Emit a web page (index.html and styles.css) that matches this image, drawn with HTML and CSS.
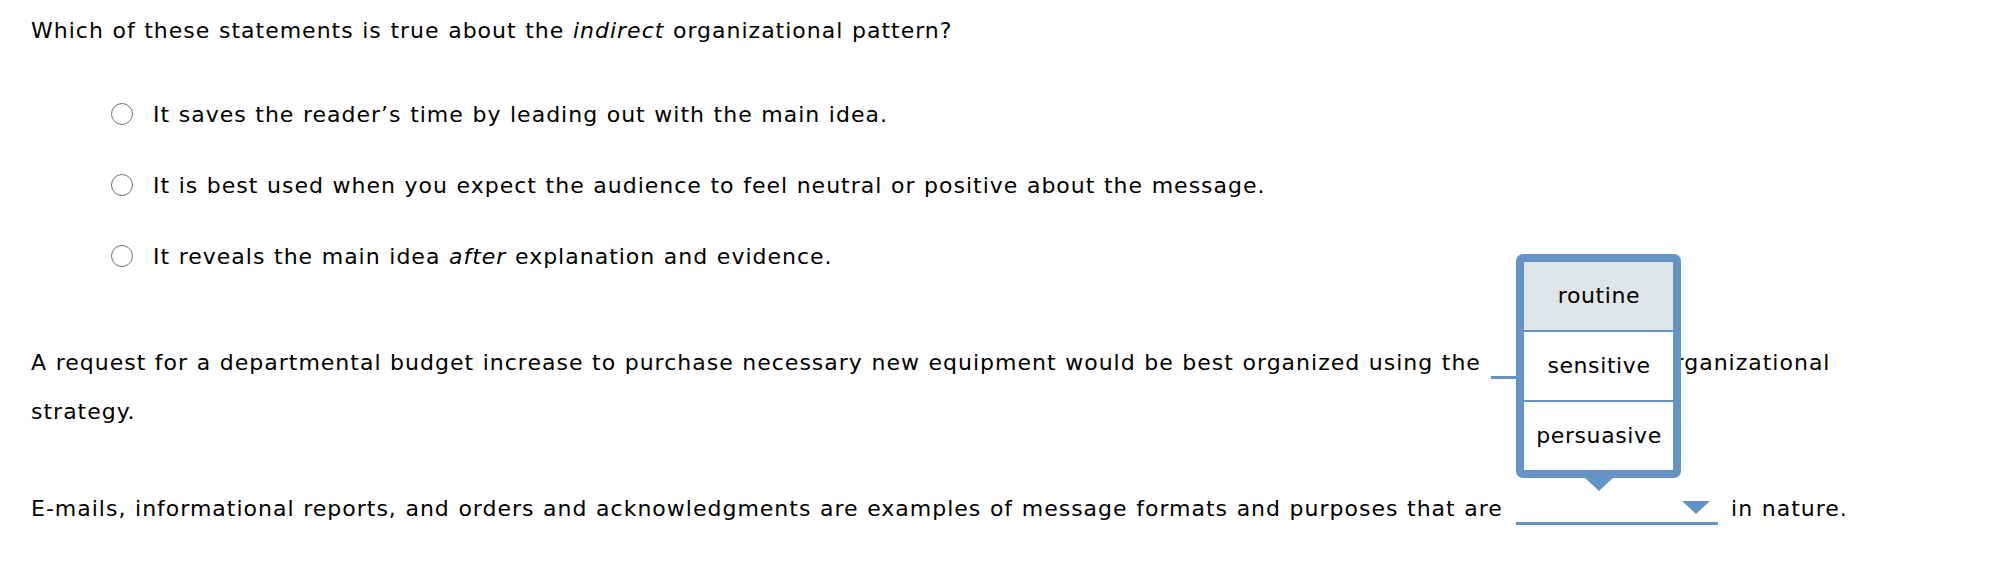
FILE: index.html
```html
<!DOCTYPE html>
<html lang="en">
<head>
<meta charset="utf-8">
<title>Quiz</title>
<link rel="stylesheet" href="styles.css">
</head>
<body>
<div class="page">
  <p class="q q1">Which of these statements is true about the <em>indirect</em> organizational pattern?</p>
  <ul class="options">
    <li class="option"><span class="radio"></span><span class="opt-text">It saves the reader’s time by leading out with the main idea.</span></li>
    <li class="option"><span class="radio"></span><span class="opt-text">It is best used when you expect the audience to feel neutral or positive about the message.</span></li>
    <li class="option"><span class="radio"></span><span class="opt-text">It reveals the main idea <em>after</em> explanation and evidence.</span></li>
  </ul>
  <p class="q q2">A request for a departmental budget increase to purchase necessary new equipment would be best organized using the <span class="dd dd1">&nbsp;<span class="dd-arrow"></span></span> organizational strategy.</p>
  <p class="q q3">E-mails, informational reports, and orders and acknowledgments are examples of message formats and purposes that are <span class="dd dd2">&nbsp;<span class="dd-arrow"></span><span class="popup"><span class="popup-item active">routine</span><span class="popup-item">sensitive</span><span class="popup-item">persuasive</span></span></span> in nature.</p>
</div>
</body>
</html>
```
FILE: styles.css
```css
html, body {
  margin: 0;
  background: #fff;
}
body {
  font-family: "DejaVu Sans", Verdana, sans-serif;
  font-size: 22px;
  letter-spacing: 1px;
  word-spacing: 0.6px;
  color: #000;
}
.page {
  padding: 16px 0 0 31px;
  width: 1850px;
}
.q {
  margin: 0;
}
.q1 {
  line-height: 30px;
}
.options {
  list-style: none;
  margin: 54px 0 0;
  padding: 0 0 0 80px;
}
.option {
  display: flex;
  align-items: flex-start;
  height: 30px;
  line-height: 30px;
}
.option + .option {
  margin-top: 41px;
}
.radio {
  flex: none;
  width: 22px;
  height: 22px;
  box-sizing: border-box;
  border: 1.5px solid #747474;
  border-radius: 50%;
  margin-top: 3px;
  margin-right: 20px;
  background: #fff;
}
.q2 {
  margin-top: 66px;
  line-height: 49px;
}
.q3 {
  margin-top: 56px;
  line-height: 33px;
}
.dd {
  display: inline-block;
  position: relative;
  line-height: 24px;
  padding-bottom: 1px;
  border-bottom: 3px solid #6494c4;
  vertical-align: baseline;
  margin: 0 4px 0 1px;
}
.dd1 {
  width: 157px;
}
.dd2 {
  width: 202px;
  margin-left: 5px;
}
.dd-arrow {
  position: absolute;
  right: 8px;
  top: 4px;
  width: 0;
  height: 0;
  border-left: 14px solid transparent;
  border-right: 14px solid transparent;
  border-top: 13px solid #6494c4;
}
.popup {
  position: absolute;
  left: 0;
  bottom: calc(100% + 19px);
  width: 165px;
  box-sizing: border-box;
  border: 8px solid #6494c4;
  border-radius: 7px;
  background: #fff;
  display: flex;
  flex-direction: column;
  z-index: 2;
  letter-spacing: 0.6px;
  line-height: 24px;
}
.popup::after {
  content: "";
  position: absolute;
  left: 50%;
  top: calc(100% + 7px);
  transform: translateX(-50%);
  width: 0;
  height: 0;
  border-left: 15px solid transparent;
  border-right: 15px solid transparent;
  border-top: 14px solid #6494c4;
}
.popup-item {
  height: 68px;
  display: flex;
  align-items: center;
  justify-content: center;
}
.popup-item + .popup-item {
  border-top: 2px solid #6494c4;
}
.popup-item.active {
  background: #dfe6e9;
}
```
